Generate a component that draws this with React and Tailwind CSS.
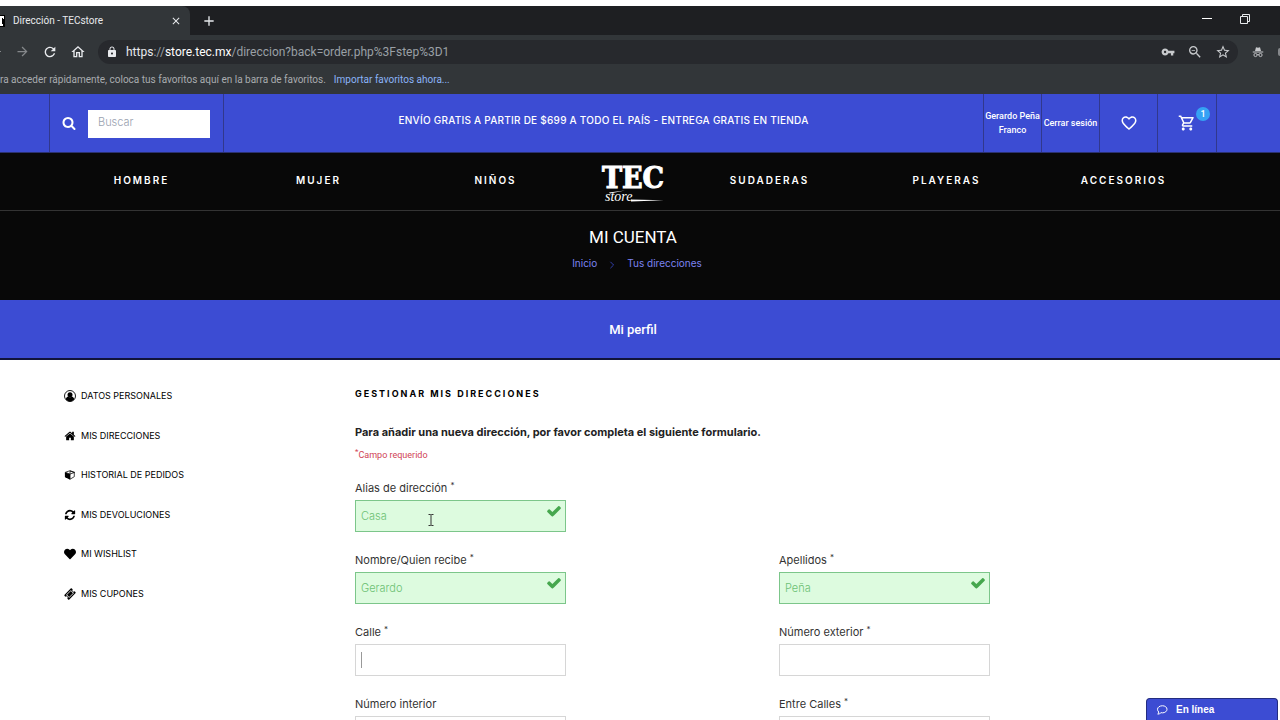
import { FaHeart } from 'react-icons/fa'
import {
  MdArrowForward,
  MdRefresh,
  MdOutlineHome,
  MdLock,
  MdVpnKey,
  MdZoomOut,
  MdStarBorder,
  MdFavoriteBorder,
  MdOutlineShoppingCart,
  MdAdd,
  MdClose,
} from 'react-icons/md'

function UserCircle({ className }) {
  return (
    <svg viewBox="0 0 24 24" className={className} aria-hidden="true">
      <circle cx="12" cy="12" r="11" fill="none" stroke="currentColor" strokeWidth="1.8" />
      <circle cx="12" cy="9.3" r="5" fill="currentColor" />
      <path d="M3.5 18.5c1-3.600 3-5 5-5.400 2 1.600 5 1.600 7 0 2 .4 4 1.800 5 5.400-2 2.800-5 4.400-8.500 4.400s-6.500-1.600-8.500-4.400z" fill="currentColor" />
    </svg>
  )
}

function House({ className }) {
  return (
    <svg viewBox="0 0 1792 1792" className={className} fill="currentColor" aria-hidden="true">
      <path d="M1472 992v480q0 26-19 45t-45 19h-384v-384h-256v384h-384q-26 0-45-19t-19-45v-480q0-1 .5-3t.5-3l575-474 575 474q1 2 1 6zm223-69l-62 74q-8 9-21 11h-3q-13 0-21-7l-692-577-692 577q-12 8-24 7-13-2-21-11l-62-74q-8-10-7-23.500t11-21.500l719-599q32-26 76-26t76 26l244 204v-195q0-14 9-23t23-9h192q14 0 23 9t9 23v408l219 182q10 8 11 21.500t-7 23.500z" />
    </svg>
  )
}

function Cube({ className }) {
  return (
    <svg viewBox="-64 0 1792 1792" className={className} aria-hidden="true">
      <path d="M832 300l640 230v620l-640 380z" fill="none" stroke="currentColor" strokeWidth="110" />
      <path d="M130 500l702-250 702 250-702 260z" fill="none" stroke="currentColor" strokeWidth="110" />
      <path d="M70 500l770 270v850l-720-390q-50-30-50-90z" fill="currentColor" />
    </svg>
  )
}

function Refresh({ className }) {
  return (
    <svg viewBox="0 0 1792 1792" className={className} fill="currentColor" aria-hidden="true">
      <path d="M1639 1056q0 5-1 7-64 268-268 434.500t-478 166.500q-146 0-282.500-55t-243.500-157l-129 129q-19 19-45 19t-45-19-19-45v-448q0-26 19-45t45-19h448q26 0 45 19t19 45-19 45l-137 137q71 66 161 102t187 36q134 0 250-65t186-179q11-17 53-117 8-23 30-23h192q13 0 22.500 9.500t9.500 22.500zm25-800v448q0 26-19 45t-45 19h-448q-26 0-45-19t-19-45 19-45l138-138q-148-137-349-137-134 0-250 65t-186 179q-11 17-53 117-8 23-30 23h-199q-13 0-22.500-9.500t-9.500-22.500v-7q65-268 270-434.500t480-166.500q146 0 284 55.500t245 156.500l130-129q19-19 45-19t45 19 19 45z" />
    </svg>
  )
}

function Ticket({ className }) {
  return (
    <svg viewBox="0 0 1792 1792" className={className} fill="currentColor" aria-hidden="true">
      <path d="M1024 452l316 316-572 572-316-316zm-211 979l618-618q19-19 19-45t-19-45l-362-362q-18-18-45-18t-45 18l-618 618q-19 19-19 45t19 45l362 362q18 18 45 18t45-18zm889-637l-907 908q-37 37-90.500 37t-90.500-37l-126-126q56-56 56-136t-56-136-136-56-136 56l-125-126q-37-37-37-90.500t37-90.500l907-906q37-37 90.500-37t90.500 37l125 125q-56 56-56 136t56 136 136 56 136-56l126 125q37 37 37 90.500t-37 90.500z" />
    </svg>
  )
}

function Search({ className }) {
  return (
    <svg viewBox="0 0 1792 1792" className={className} fill="currentColor" aria-hidden="true">
      <path d="M1216 832q0-185-131.500-316.500t-316.500-131.500-316.500 131.500-131.500 316.500 131.500 316.500 316.500 131.500 316.500-131.500 131.500-316.500zm512 832q0 52-38 90t-90 38q-54 0-90-38l-343-342q-179 124-399 124-143 0-273.500-55.500t-225-150-150-225-55.500-273.500 55.500-273.500 150-225 225-150 273.500-55.500 273.500 55.500 225 150 150 225 55.500 273.500q0 220-124 399l343 343q37 37 37 90z" />
    </svg>
  )
}

function Check({ className }) {
  return (
    <svg viewBox="0 0 1792 1792" className={className} fill="currentColor" aria-hidden="true">
      <path d="M1671 566q0 40-28 68l-724 724-136 136q-28 28-68 28t-68-28l-136-136-362-362q-28-28-28-68t28-68l136-136q28-28 68-28t68 28l294 295 656-657q28-28 68-28t68 28l136 136q28 28 28 68z" />
    </svg>
  )
}

function Incognito({ className }) {
  return (
    <svg viewBox="0 0 24 24" className={className} aria-hidden="true">
      <path d="M8 2.500l4 1 4-1 2 7.500H6zM1.500 11h21v1.800h-21z" fill="currentColor" />
      <g fill="none" stroke="currentColor" strokeWidth="1.800">
        <circle cx="7" cy="18" r="3.200" />
        <circle cx="17" cy="18" r="3.200" />
        <path d="M10.200 17.500q1.800-1 3.600 0" />
      </g>
    </svg>
  )
}

function Bubble({ className }) {
  return (
    <svg viewBox="0 0 24 24" className={className} fill="none" stroke="currentColor" strokeWidth="2" aria-hidden="true">
      <path d="M13 3.500c5 0 9 3 9 7s-4 7.200-9 7.200c-1 0-2-.1-3-.4-1.500 1.700-4 3-6.500 3 1.300-1.200 2-2.800 2-4.300-1.500-1.300-2.500-3.200-2.500-5.500 0-4 4.500-7 10-7z" />
    </svg>
  )
}

function Favicon() {
  return (
    <svg viewBox="0 0 5 12" className="h-3 w-[5px] bg-black" fill="#fff" aria-hidden="true">
      <path d="M0 1h4v3H3V3H2v6h1v2H0z" />
    </svg>
  )
}

function Browser() {
  return (
    <div className="bg-[#323639] font-['Roboto','Noto_Sans',sans-serif] text-[#e8eaed]">
      <div className="h-[6px] bg-white" />
      <div className="flex h-[29px] bg-[#1e1f22]">
        <div className="flex w-[190px] items-center rounded-tr-lg bg-[#323639] pr-2 text-[10px]">
          <Favicon />
          <span className="ml-2 flex-1">Dirección - TECstore</span>
          <button aria-label="Cerrar pestaña"><MdClose className="size-3" /></button>
        </div>
        <button aria-label="Nueva pestaña" className="ml-[11px]"><MdAdd className="size-4" /></button>
        <div className="ml-auto flex items-center gap-7 pr-[30px]">
          <button aria-label="Minimizar" className="mb-1 h-px w-[10px] bg-white" />
          <button aria-label="Restaurar" className="mb-1">
            <svg viewBox="0 0 10 10" className="size-[10px]" fill="none" stroke="currentColor" aria-hidden="true">
              <path d="M.5 2.500h7v7h-7zM2.500 2.500v-2h7v7h-2" />
            </svg>
          </button>
        </div>
      </div>
      <div className="flex h-[33px] items-center">
        <button aria-label="Atrás" className="h-px w-px bg-[#85888b]" />
        <button aria-label="Adelante" className="ml-[14px] text-[#85888b]"><MdArrowForward className="size-[15px]" /></button>
        <button aria-label="Recargar" className="ml-3"><MdRefresh className="size-4" /></button>
        <button aria-label="Inicio" className="ml-3"><MdOutlineHome className="size-4" /></button>
        <div className="ml-3 flex h-6 flex-1 items-center gap-3 rounded-full bg-[#27292d] pl-2 pr-[7px]">
          <MdLock className="size-3" />
          <span className="-ml-1 flex-1 text-xs text-[#9aa0a6]">
            <span className="text-[#e8eaed]">https</span>://<span className="text-white">store.tec.mx</span>/direccion?back=order.php%3Fstep%3D1
          </span>
          <MdVpnKey className="size-[14px] text-[#c8cacd]" />
          <MdZoomOut className="size-4 text-[#c8cacd]" />
          <MdStarBorder className="size-4 text-[#c8cacd]" />
        </div>
        <Incognito className="mx-[14px] size-3 text-[#c8cacd]" />
        <span className="h-2 w-[2px] rounded-l-full bg-[#85888b]" />
      </div>
      <div className="flex h-[26px] items-center gap-2 overflow-hidden pb-1 text-[10px] text-[#a9acaf]">
        <span>ra acceder rápidamente, coloca tus favoritos aquí en la barra de favoritos.</span>
        <a href="#importar" className="text-[#8ab4f8]">Importar favoritos ahora...</a>
      </div>
    </div>
  )
}

function TopBar() {
  return (
    <div className="flex h-[59px] border-b border-[#2b3170] bg-[#3c4cd3] text-white">
      <div className="ml-[49px] flex w-[175px] items-center border-x border-[#31388c] pl-3">
        <button aria-label="Buscar"><Search className="size-[14px]" /></button>
        <input
          aria-label="Buscar"
          placeholder="Buscar"
          className="ml-3 mt-px h-[28px] w-[122px] bg-white px-[10px] pb-1 text-[11px] font-light text-gray-700 placeholder:text-gray-400"
        />
      </div>
      <p className="flex-1 pt-[18px] text-center text-[10px] font-medium leading-4 tracking-wide">
        ENVÍO GRATIS A PARTIR DE $699 A TODO EL PAÍS - ENTREGA GRATIS EN TIENDA
      </p>
      <div className="mr-[63px] grid grid-cols-[repeat(4,58px)] divide-x divide-[#31388c] border-x border-[#31388c] font-['Roboto',sans-serif] text-[9px] font-medium leading-[14px]">
        <a href="#cuenta" className="flex items-center justify-center text-center">Gerardo Peña Franco</a>
        <a href="#salir" className="flex items-center justify-center whitespace-nowrap text-center">Cerrar sesión</a>
        <a href="#wishlist" aria-label="Wishlist" className="flex items-center justify-center pb-px"><MdFavoriteBorder className="size-[18px]" /></a>
        <a href="#carrito" aria-label="Carrito" className="relative flex items-center justify-center pb-px">
          <MdOutlineShoppingCart className="size-[18px]" />
          <span className="absolute right-[6px] top-[13px] size-[14px] rounded-full bg-[#35a2f4] text-center">1</span>
        </a>
      </div>
    </div>
  )
}

function Logo() {
  return (
    <a href="#inicio" aria-label="TEC store" className="block">
      <svg viewBox="0 0 72 46" className="h-[46px] w-[72px]" fill="#fff">
        <text x="36" y="29" textAnchor="middle" fontFamily="DejaVu Serif Condensed, DejaVu Serif, serif" fontWeight="bold" fontSize="30" stroke="#fff" strokeWidth="1">TEC</text>
        <text x="8" y="42" fontFamily="Liberation Serif, serif" fontStyle="italic" fontSize="14">store</text>
        <path d="M12 33.500l16-2-15 3zM34 40.500l33 .8-33 1.200z" />
      </svg>
    </a>
  )
}

function NavLink({ children }) {
  return <a href="#categoria" className="pb-1 text-center text-[10px] font-semibold leading-4 tracking-[2px]">{children}</a>
}

function Header() {
  return (
    <header className="bg-[#080808] text-white">
      <nav className="grid h-[58px] grid-cols-[1fr_1fr_1fr_97px_1fr_1fr_1fr] items-center border-b border-[#333] pl-[53px] pr-[68px]">
        <NavLink>HOMBRE</NavLink>
        <NavLink>MUJER</NavLink>
        <NavLink>NIÑOS</NavLink>
        <div className="flex justify-center"><Logo /></div>
        <NavLink>SUDADERAS</NavLink>
        <NavLink>PLAYERAS</NavLink>
        <NavLink>ACCESORIOS</NavLink>
      </nav>
      <div className="flex h-[89px] flex-col items-center pr-[14px] pt-3">
        <h1 className="font-['Roboto',sans-serif] text-[17px] leading-7">MI CUENTA</h1>
        <div className="mt-1 flex items-center gap-3 pl-2 text-[10px] leading-4 text-[#7b83f0]">
          <a href="#inicio">Inicio</a>
          <svg viewBox="0 0 6 10" className="mt-1 h-2 w-[6px]" fill="none" stroke="#3c4cd3" aria-hidden="true"><path d="M1 1l4 4-4 4" /></svg>
          <a href="#direcciones">Tus direcciones</a>
        </div>
      </div>
    </header>
  )
}

const menu = [
  { label: 'DATOS PERSONALES', Icon: UserCircle },
  { label: 'MIS DIRECCIONES', Icon: House },
  { label: 'HISTORIAL DE PEDIDOS', Icon: Cube },
  { label: 'MIS DEVOLUCIONES', Icon: Refresh },
  { label: 'MI WISHLIST', Icon: FaHeart },
  { label: 'MIS CUPONES', Icon: Ticket },
]

function Field({ id, label, value, required, focused, children }) {
  const color = value ? 'border-[#7cc68a] bg-[#ddfbdf]' : 'border-[#d6d6d6] bg-white'
  return (
    <div>
      <label htmlFor={id} className="block text-[11px] leading-4 text-[#333]">
        {label} {required && <sup className="text-[8px]">*</sup>}
      </label>
      <div className="relative mt-1 w-[211px]">
        <input
          id={id}
          defaultValue={value}
          className={`block h-8 w-full border px-[5px] text-[11px] font-light text-[#6cc174] outline-none ${color}`}
        />
        {value && <Check className="absolute right-1 top-[3px] size-4 text-[#46a74e]" />}
        {focused && <span className="absolute left-[6px] top-2 h-4 w-px bg-[#999]" />}
        {children}
      </div>
    </div>
  )
}

export default function App() {
  return (
    <div className="h-screen overflow-hidden bg-white font-['Inter',sans-serif] text-black">
      <Browser />
      <TopBar />
      <Header />
      <div className="h-[60px] border-b-2 border-[#11143a] bg-[#3c4cd3] pr-[14px] pt-5 text-center font-['Roboto',sans-serif] text-[13px] font-medium leading-5 text-white">
        Mi perfil
      </div>
      <div className="flex pl-16">
        <aside className="w-[291px] pt-7">
          <ul className="flex h-[214px] flex-col justify-between">
            {menu.map(({ label, Icon }) => (
              <li key={label}>
                <a href="#perfil" className="flex items-center gap-[5px] text-[9px] leading-4">
                  <Icon className="size-3" />
                  {label}
                </a>
              </li>
            ))}
          </ul>
        </aside>
        <main className="flex-1 pt-[26px]">
          <h2 className="text-[9px] font-bold leading-4 tracking-[2px]">GESTIONAR MIS DIRECCIONES</h2>
          <p className="mt-5 text-[11px] font-bold leading-5 text-[#222]">
            Para añadir una nueva dirección, por favor completa el siguiente formulario.
          </p>
          <p className="mt-[5px] font-['Roboto',sans-serif] text-[9px] leading-4 text-[#cf3f55]">
            <sup className="text-[8px]">*</sup>Campo requerido
          </p>
          <form className="mt-[17px] grid grid-cols-2 gap-y-5 pr-[77px]">
            <div className="col-span-2">
              <Field id="alias" label="Alias de dirección" value="Casa" required>
                <svg viewBox="0 0 6 12" className="absolute left-[73px] top-[14px] h-3 w-[6px]" fill="none" stroke="#333" aria-hidden="true">
                  <path d="M.5 .5h2l.5.5.5-.5h2M3 1v10M.5 11.500h2l.5-.5.5.5h2" />
                </svg>
              </Field>
            </div>
            <Field id="nombre" label="Nombre/Quien recibe" value="Gerardo" required />
            <Field id="apellidos" label="Apellidos" value="Peña" required />
            <Field id="calle" label="Calle" required focused />
            <Field id="exterior" label="Número exterior" required />
            <Field id="interior" label="Número interior" />
            <Field id="entre" label="Entre Calles" required />
          </form>
        </main>
      </div>
      <button className="fixed bottom-0 right-[2px] flex h-[22px] w-[132px] items-center gap-2 rounded-t-sm border border-b-0 border-[#232c80] bg-[#3c4cd3] pl-[9px] font-['Liberation_Sans',sans-serif] text-[10px] font-bold text-white">
        <Bubble className="size-3" />
        En línea
      </button>
    </div>
  )
}
